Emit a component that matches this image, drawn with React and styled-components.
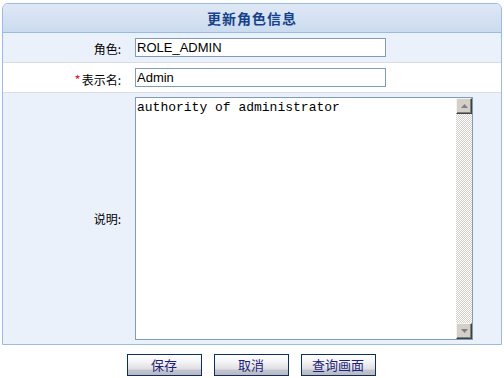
import React, { useState } from "react";
import styled, { createGlobalStyle } from "styled-components";

const GlobalStyle = createGlobalStyle`
  body {
    margin: 0;
    background: #ffffff;
    font-family: "Liberation Sans", "Noto Sans CJK SC", sans-serif;
    font-size: 12px;
  }
`;

const Page = styled.div`
  width: 504px;
  padding: 3px 0 0 2px;
  box-sizing: border-box;
`;

const Panel = styled.div`
  width: 500px;
  border: 1px solid #99bbe8;
  border-radius: 6px 6px 0 0;
  box-sizing: border-box;
  background: #eaf1fb;
`;

const Header = styled.div`
  height: 28px;
  display: flex;
  align-items: center;
  justify-content: center;
  border-bottom: 1px solid #99bbe8;
  border-radius: 5px 5px 0 0;
  background: linear-gradient(#dfe8f5, #cbdbef);
  color: #15428b;
  font-family: "Noto Sans CJK SC", sans-serif;
  font-weight: bold;
  font-size: 14px;
  letter-spacing: 1px;
`;

const Row = styled.div`
  display: flex;
  align-items: ${(p) => (p.$tall ? "center" : "flex-start")};
  height: ${(p) => p.$height}px;
  padding-top: ${(p) => (p.$tall ? 0 : 5)}px;
  box-sizing: border-box;
  background: ${(p) => (p.$white ? "#ffffff" : "#eaf1fb")};
  border-bottom: ${(p) => (p.$last ? "none" : "1px solid #d9dde3")};
`;

const Label = styled.div`
  width: 118px;
  flex-shrink: 0;
  text-align: right;
  padding-top: ${(p) => (p.$tall ? 0 : 2)}px;
  font-family: "Noto Sans CJK SC", sans-serif;
  font-size: 12px;
  color: #000;
`;

const Star = styled.span`
  color: #e0141e;
  font-size: 13px;
  margin-right: 1px;
`;

const Field = styled.div`
  margin-left: 14px;
`;

const TextInput = styled.input`
  width: 251px;
  height: 19px;
  box-sizing: border-box;
  border: 1px solid #7f9db9;
  padding: 0 1px;
  margin: 0;
  font-family: "Liberation Sans", sans-serif;
  font-size: 13px;
  color: #000;
  background: #fff;
  outline: none;
`;

const AreaBox = styled.div`
  display: flex;
  width: 338px;
  height: 243px;
  box-sizing: border-box;
  border: 1px solid #7f9db9;
  border-right: none;
  background: #fff;
`;

const Area = styled.textarea`
  flex: 1;
  border: none;
  resize: none;
  outline: none;
  overflow: hidden;
  padding: 2px 1px;
  margin: 0;
  font-family: "Liberation Mono", monospace;
  font-size: 13px;
  line-height: 15px;
  color: #000;
`;

const ScrollBar = styled.div`
  width: 16px;
  display: flex;
  flex-direction: column;
  border-right: 1px solid #7f9db9;
  background-color: #fff;
  background-image: repeating-conic-gradient(#d4d0c8 0 25%, #ffffff 0 50%);
  background-size: 2px 2px;
`;

const ScrollBtn = styled.div`
  width: 16px;
  height: 16px;
  box-sizing: border-box;
  background: #d4d0c8;
  border-top: 1px solid #f4f3ee;
  border-left: 1px solid #f4f3ee;
  border-right: 1px solid #404040;
  border-bottom: 1px solid #404040;
  box-shadow: inset -1px -1px 0 #808080;
  display: flex;
  align-items: center;
  justify-content: center;
`;

const Track = styled.div`
  flex: 1;
`;

const Buttons = styled.div`
  display: flex;
  justify-content: center;
  gap: 12px;
  margin-top: 9px;
  padding-right: 4px;
`;

const Button = styled.button`
  width: 75px;
  height: 22px;
  padding: 0 0 2px;
  border: 1px solid #0b2f61;
  background: linear-gradient(
    #ffffff 0%,
    #f4f4f7 35%,
    #dedee4 70%,
    #c4c4cc 76%,
    #b8b8c0 100%
  );
  font-family: "Noto Sans CJK SC", sans-serif;
  font-size: 13px;
  color: #1f1f78;
  cursor: pointer;
`;

const Arrow = ({ up }) => (
  <svg width="7" height="4" viewBox="0 0 7 4">
    <path d={up ? "M0 4 L3.5 0 L7 4 Z" : "M0 0 L3.5 4 L7 0 Z"} fill="#808080" />
  </svg>
);

export default function App() {
  const [role, setRole] = useState("ROLE_ADMIN");
  const [name, setName] = useState("Admin");
  const [desc, setDesc] = useState("authority of administrator");

  return (
    <Page>
      <GlobalStyle />
      <Panel>
        <Header>更新角色信息</Header>
        <Row $height={30}>
          <Label>角色:</Label>
          <Field>
            <TextInput value={role} onChange={(e) => setRole(e.target.value)} />
          </Field>
        </Row>
        <Row $height={30} $white>
          <Label>
            <Star>*</Star>表示名:
          </Label>
          <Field>
            <TextInput value={name} onChange={(e) => setName(e.target.value)} />
          </Field>
        </Row>
        <Row $height={251} $tall $last>
          <Label $tall>说明:</Label>
          <Field>
            <AreaBox>
              <Area value={desc} onChange={(e) => setDesc(e.target.value)} />
              <ScrollBar>
                <ScrollBtn>
                  <Arrow up />
                </ScrollBtn>
                <Track />
                <ScrollBtn>
                  <Arrow />
                </ScrollBtn>
              </ScrollBar>
            </AreaBox>
          </Field>
        </Row>
      </Panel>
      <Buttons>
        <Button>保存</Button>
        <Button>取消</Button>
        <Button>查询画面</Button>
      </Buttons>
    </Page>
  );
}
